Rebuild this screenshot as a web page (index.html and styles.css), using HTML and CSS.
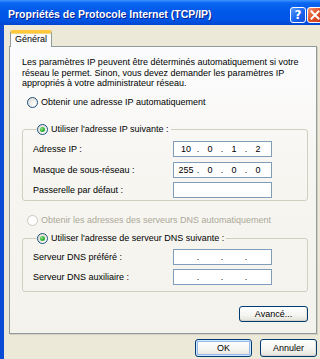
FILE: index.html
```html
<!DOCTYPE html>
<html lang="fr">
<head>
<meta charset="utf-8">
<title>Propriétés de Protocole Internet (TCP/IP)</title>
<link rel="stylesheet" href="styles.css">
</head>
<body>
<div class="window">
  <div class="titlebar">
    <span class="title">Propriétés de Protocole Internet (TCP/IP)</span>
    <div class="tb-buttons">
      <span class="tb-btn help">?</span>
      <span class="tb-btn close"><svg width="10" height="10" viewBox="0 0 10 10"><path d="M1.5 1.5 L8.5 8.5 M8.5 1.5 L1.5 8.5" stroke="#fff" stroke-width="2" stroke-linecap="square"/></svg></span>
    </div>
  </div>
  <div class="client">
    <div class="tabs"><div class="tab">Général</div></div>
    <div class="panel">
      <p class="intro">Les paramètres IP peuvent être déterminés automatiquement si votre<br>réseau le permet. Sinon, vous devez demander les paramètres IP<br>appropriés à votre administrateur réseau.</p>
      <div class="radio-row auto-ip"><span class="radio"></span><span>Obtenir une adresse IP automatiquement</span></div>
      <fieldset class="group g-ip">
        <legend><span class="radio checked"></span><span>Utiliser l'adresse IP suivante :</span></legend>
        <div class="fields">
          <span class="flabel">Adresse IP :</span>
          <div class="ipbox"><span class="seg">10</span><span class="dot">.</span><span class="seg">0</span><span class="dot">.</span><span class="seg">1</span><span class="dot">.</span><span class="seg">2</span></div>
          <span class="flabel">Masque de sous-réseau :</span>
          <div class="ipbox"><span class="seg">255</span><span class="dot">.</span><span class="seg">0</span><span class="dot">.</span><span class="seg">0</span><span class="dot">.</span><span class="seg">0</span></div>
          <span class="flabel">Passerelle par défaut :</span>
          <div class="ipbox"></div>
        </div>
      </fieldset>
      <div class="radio-row auto-dns disabled"><span class="radio"></span><span>Obtenir les adresses des serveurs DNS automatiquement</span></div>
      <fieldset class="group g-dns">
        <legend><span class="radio checked"></span><span>Utiliser l'adresse de serveur DNS suivante :</span></legend>
        <div class="fields">
          <span class="flabel">Serveur DNS préféré :</span>
          <div class="ipbox"><span class="seg"></span><span class="dot">.</span><span class="seg"></span><span class="dot">.</span><span class="seg"></span><span class="dot">.</span><span class="seg"></span></div>
          <span class="flabel">Serveur DNS auxiliaire :</span>
          <div class="ipbox"><span class="seg"></span><span class="dot">.</span><span class="seg"></span><span class="dot">.</span><span class="seg"></span><span class="dot">.</span><span class="seg"></span></div>
        </div>
      </fieldset>
      <div class="adv-row"><button class="btn adv" type="button">Avancé...</button></div>
    </div>
    <div class="dlg-buttons">
      <button class="btn ok" type="button">OK</button>
      <button class="btn cancel" type="button">Annuler</button>
    </div>
  </div>
</div>
</body>
</html>
```

FILE: styles.css
```css
* { box-sizing: border-box; }
html, body { margin: 0; padding: 0; }
body {
  width: 320px;
  height: 359px;
  overflow: hidden;
  background: #ECE9D8;
  font-family: "Liberation Sans", Arial, sans-serif;
  font-size: 9px;
  color: #000;
}
.window {
  display: flex;
  flex-direction: column;
  width: 320px;
  height: 359px;
}
.titlebar {
  flex: none;
  height: 25px;
  display: flex;
  align-items: flex-start;
  justify-content: space-between;
  padding-left: 8px;
  background: linear-gradient(to bottom, #3D95FF 0%, #0A66F0 12%, #0058E8 45%, #0055E5 80%, #0046D0 100%);
}
.title {
  margin-top: 8px;
  color: #fff;
  font-weight: bold;
  font-size: 10.5px;
  line-height: 12px;
  text-shadow: 1px 1px 0 #0A1E8C;
  white-space: nowrap;
}
.tb-buttons {
  display: flex;
  gap: 1px;
  margin-top: 7px;
  margin-right: -3px;
}
.tb-btn {
  width: 16px;
  height: 16px;
  border: 1px solid #fff;
  border-radius: 3px;
  display: flex;
  align-items: center;
  justify-content: center;
  color: #fff;
  font-family: "DejaVu Sans", sans-serif;
  font-weight: bold;
  font-size: 12px;
  line-height: 1;
}
.help { background: linear-gradient(135deg, #5A9CFF 0%, #1E66F0 50%, #0B4FD8 100%); }
.close { background: linear-gradient(135deg, #F49A7A 0%, #E2542C 45%, #C8381A 100%); }
.client {
  flex: 1;
  display: flex;
  flex-direction: column;
  border-left: 4px solid #0B4CD6;
  padding: 5px 3px 0 5px;
  background: #ECE9D8;
}
.tabs { display: flex; }
.tab {
  position: relative;
  z-index: 1;
  margin-left: 1px;
  margin-bottom: -1px;
  width: 42px;
  height: 17px;
  border-top: 3px solid #FFC83C;
  border-left: 1px solid #919B9C;
  border-right: 1px solid #919B9C;
  border-radius: 3px 3px 0 0;
  background: #FCFCFE;
  text-align: center;
  line-height: 12px;
  box-shadow: inset 0 1px 0 #F8D77E;
}
.panel {
  height: 288px;
  border: 1px solid #919B9C;
  box-shadow: 1px 1px 0 #D3D0C2;
  background: linear-gradient(to bottom, #FCFCFE 0%, #F7F6F2 40%, #F3F2EC 100%);
  padding: 0 8px 0 12px;
  display: flex;
  flex-direction: column;
}
.intro {
  margin: 10px 0 0 0;
  line-height: 10.5px;
  white-space: nowrap;
}
.radio-row {
  display: flex;
  align-items: center;
  gap: 3px;
  height: 12px;
  padding-left: 5px;
  white-space: nowrap;
}
.auto-ip { margin-top: 7.5px; }
.auto-dns { margin-top: 13px; }
.disabled { color: #ACA899; }
.radio {
  flex: none;
  width: 11px;
  height: 11px;
  border-radius: 50%;
  border: 1px solid #1C5180;
  background: radial-gradient(circle at 70% 70%, #FFFFFF 0%, #F0EFEA 40%, #D6D3C8 100%);
  display: inline-flex;
  align-items: center;
  justify-content: center;
}
.radio.checked::after {
  content: "";
  width: 5px;
  height: 5px;
  border-radius: 50%;
  background: radial-gradient(circle at 35% 35%, #8FE38F 0%, #34B434 50%, #1B8E1B 100%);
}
.disabled .radio {
  border-color: #CAC8BB;
  background: #FFFFFF;
}
.group {
  margin: 0;
  border: 1px solid #D0D0BF;
  border-radius: 3px;
  min-width: 0;
}
.group legend {
  display: flex;
  align-items: center;
  gap: 3px;
  height: 12px;
  padding: 0 2px 0 0;
  margin-left: 4px;
  white-space: nowrap;
}
.g-ip { margin-top: 15px; padding: 6px 35px 2px 10px; }
.g-dns { margin-top: 6px; padding: 5px 35px 6px 10px; }
.fields {
  display: grid;
  grid-template-columns: 1fr 99px;
  align-items: center;
  row-gap: 4.5px;
}
.g-dns .fields { row-gap: 4px; }
.flabel { white-space: nowrap; }
.ipbox {
  height: 16px;
  border: 1px solid #7F9DB9;
  background: #fff;
  display: flex;
  align-items: center;
  padding-left: 2px;
}
.seg { width: 20px; text-align: center; }
.dot { width: 4px; text-align: center; }
.adv-row {
  display: flex;
  justify-content: flex-end;
  margin-top: 14px;
}
.btn {
  font-family: inherit;
  font-size: 9px;
  color: #000;
  padding: 0;
  border: 1px solid #003C74;
  border-radius: 3px;
  background: linear-gradient(to bottom, #FFFFFF 0%, #F4F4F0 60%, #E3E1D8 100%);
  box-shadow: inset 0 -1px 0 #D6D0C5, inset -1px 0 0 #E6E3D8;
}
.adv { width: 69px; height: 16px; }
.dlg-buttons {
  display: flex;
  justify-content: flex-end;
  gap: 8px;
  margin-top: 5px;
}
.dlg-buttons .btn { width: 57px; height: 18px; }
.ok { box-shadow: inset 0 0 0 1px #CEE7FF, inset 0 0 0 2px #98B8EA; }
```
